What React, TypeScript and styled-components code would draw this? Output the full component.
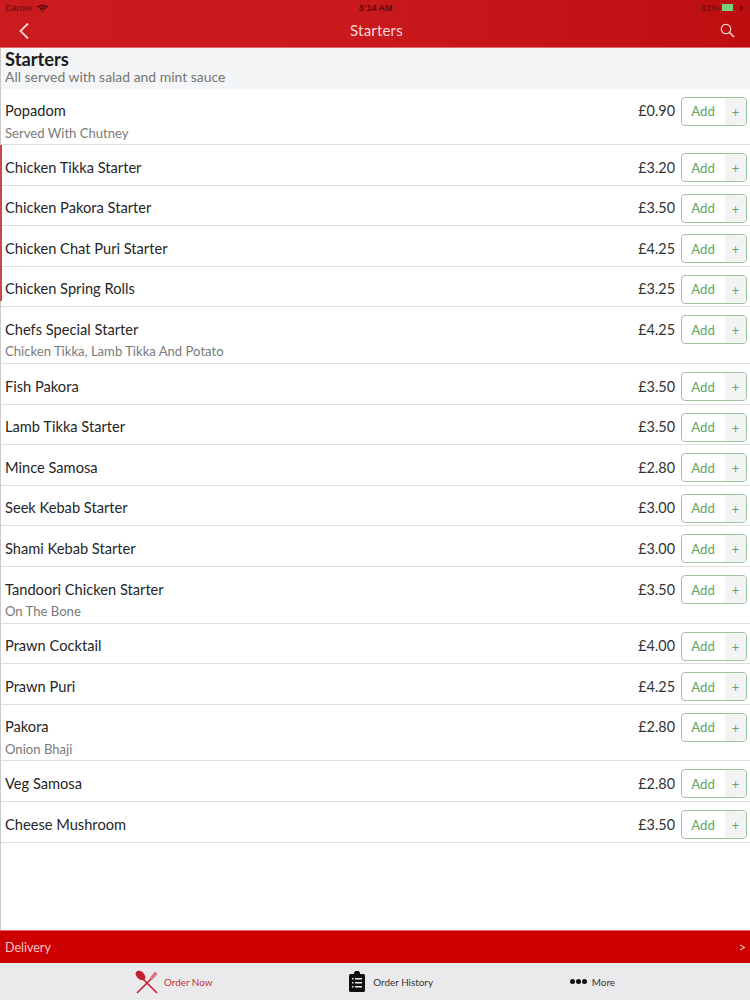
import React from 'react';
import styled, { createGlobalStyle } from 'styled-components';

const GlobalStyle = createGlobalStyle`
  html, body {
    margin: 0;
    padding: 0;
    background: #fff;
  }
  * {
    box-sizing: border-box;
  }
`;

const Page = styled.div`
  width: 750px;
  height: 1000px;
  display: flex;
  flex-direction: column;
  overflow: hidden;
  font-family: Lato, "Liberation Sans", sans-serif;
`;

const Header = styled.header`
  height: 48px;
  flex: none;
  background: linear-gradient(90deg, #ca1b1e 0%, #c81a1d 50%, #bd0f10 100%);
  border-bottom: 1px solid #e8696b;
  display: flex;
  flex-direction: column;
`;

const StatusBar = styled.div`
  height: 14px;
  padding: 1px 4px 0 5px;
  display: grid;
  grid-template-columns: 1fr auto 1fr;
  align-items: center;
  font-family: "Liberation Sans", Arial, sans-serif;
  font-size: 9px;
  color: #5e0b0d;
`;

const StatusLeft = styled.div`
  display: flex;
  align-items: center;
  gap: 4px;
`;

const StatusTime = styled.div`
  font-weight: 700;
`;

const StatusRight = styled.div`
  display: flex;
  align-items: center;
  justify-content: flex-end;
  gap: 3px;
`;

const Battery = styled.div`
  width: 11px;
  height: 7px;
  background: #79d27b;
`;

const NavBar = styled.div`
  flex: 1;
  display: grid;
  grid-template-columns: 1fr auto 1fr;
  align-items: center;
  padding: 0 15px 0 18px;
`;

const NavTitle = styled.div`
  font-size: 15px;
  color: #f8d5d5;
  letter-spacing: 0.2px;
  margin-top: -1px;
`;

const NavRight = styled.div`
  display: flex;
  justify-content: flex-end;
`;

const Main = styled.main`
  flex: 1;
  position: relative;
  border-left: 1px solid #c9c9c9;
`;

const ScrollMark = styled.div`
  position: absolute;
  left: -1px;
  top: 97px;
  width: 1.5px;
  height: 156px;
  background: #c9474d;
`;

const SectionHead = styled.div`
  height: 40.5px;
  padding: 1.5px 4px 0;
  background: #f4f5f7;
`;

const SectionTitle = styled.h2`
  margin: 0;
  font-size: 18.3px;
  line-height: 19px;
  font-weight: 700;
  color: #1b1b1b;
`;

const SectionNote = styled.p`
  margin: 0;
  font-size: 13.95px;
  line-height: 16px;
  color: #757575;
`;

const Row = styled.div`
  padding: 8px 3px 2.6px 4px;
  border-bottom: 1px solid #dedede;
`;

const RowMain = styled.div`
  height: 29px;
  display: flex;
  align-items: center;
`;

const ItemName = styled.div`
  flex: 1;
  font-size: 14.65px;
  color: #262626;
  margin-top: -1px;
`;

const Price = styled.div`
  font-size: 14.4px;
  color: #333;
  margin-right: 6px;
  margin-top: -1px;
`;

const AddButton = styled.div`
  width: 66px;
  height: 29px;
  display: flex;
  border: 1px solid #9cc59e;
  border-radius: 4px;
  overflow: hidden;
  background: #fff;
`;

const AddLabel = styled.div`
  flex: 1;
  display: flex;
  align-items: center;
  justify-content: center;
  padding-right: 1px;
  font-size: 13.2px;
  color: #5ea862;
`;

const AddPlus = styled.div`
  width: 21px;
  display: flex;
  align-items: center;
  justify-content: center;
  padding-top: 1px;
  font-size: 13px;
  color: #6f9e72;
  background: #f2f3f3;
`;

const ItemNote = styled.div`
  height: 16px;
  font-size: 13.1px;
  line-height: 14px;
  color: #7a7a7a;
`;

const DeliveryBar = styled.div`
  height: 33px;
  flex: none;
  padding: 0 4px 0 5px;
  display: flex;
  align-items: center;
  justify-content: space-between;
  background: #cc0000;
  border-top: 1px solid #e8696b;
  font-size: 12.5px;
  color: #f5c9c9;
`;

const TabBar = styled.nav`
  height: 37px;
  flex: none;
  padding: 0 135px;
  display: flex;
  align-items: center;
  justify-content: space-between;
  background: #eaeaec;
`;

const Tab = styled.div<{ $active?: boolean }>`
  display: flex;
  align-items: center;
  gap: ${(p) => (p.$active ? '5px' : '8px')};
  font-size: 9.9px;
  color: ${(p) => (p.$active ? '#c0303c' : '#333')};
`;

const MoreTab = styled(Tab)`
  gap: 5px;
`;

const Dots = styled.div`
  display: flex;
  gap: 1px;
`;

const Dot = styled.span`
  width: 5px;
  height: 5px;
  border-radius: 50%;
  background: #111;
`;

const items = [
  { name: 'Popadom', price: '0.90', note: 'Served With Chutney' },
  { name: 'Chicken Tikka Starter', price: '3.20' },
  { name: 'Chicken Pakora Starter', price: '3.50' },
  { name: 'Chicken Chat Puri Starter', price: '4.25' },
  { name: 'Chicken Spring Rolls', price: '3.25' },
  { name: 'Chefs Special Starter', price: '4.25', note: 'Chicken Tikka, Lamb Tikka And Potato' },
  { name: 'Fish Pakora', price: '3.50' },
  { name: 'Lamb Tikka Starter', price: '3.50' },
  { name: 'Mince Samosa', price: '2.80' },
  { name: 'Seek Kebab Starter', price: '3.00' },
  { name: 'Shami Kebab Starter', price: '3.00' },
  { name: 'Tandoori Chicken Starter', price: '3.50', note: 'On The Bone' },
  { name: 'Prawn Cocktail', price: '4.00' },
  { name: 'Prawn Puri', price: '4.25' },
  { name: 'Pakora', price: '2.80', note: 'Onion Bhaji' },
  { name: 'Veg Samosa', price: '2.80' },
  { name: 'Cheese Mushroom', price: '3.50' },
];

const App: React.FC = () => {
  return (
    <Page>
      <GlobalStyle />
      <Header>
        <StatusBar>
          <StatusLeft>
            Carrier
            <svg width="11" height="8" viewBox="0 0 11 8">
              <path d="M0 2.6a8 8 0 0 1 11 0L9.8 3.9a6.2 6.2 0 0 0-8.6 0zM2.2 4.7a5 5 0 0 1 6.6 0L7.6 6a3.2 3.2 0 0 0-4.2 0zM4.2 6.6a1.9 1.9 0 0 1 2.6 0L5.5 8z" fill="#5e0b0d" />
            </svg>
          </StatusLeft>
          <StatusTime>3:14 AM</StatusTime>
          <StatusRight>
            61%
            <Battery />
            <svg width="10" height="8" viewBox="0 0 10 8">
              <path d="M6 0 3 4.5h2L4 8l3.4-4.8H5.3z" fill="#5e0b0d" />
            </svg>
          </StatusRight>
        </StatusBar>
        <NavBar>
          <svg width="12" height="18" viewBox="0 0 12 18" fill="none">
            <path d="M10 1.5 2.5 9l7.5 7.5" stroke="#f8d5d5" strokeWidth="1.8" />
          </svg>
          <NavTitle>Starters</NavTitle>
          <NavRight>
            <svg width="15" height="15" viewBox="0 0 15 15" fill="none">
              <circle cx="6" cy="6" r="4.7" stroke="#f8d5d5" strokeWidth="1.2" />
              <path d="m9.5 9.5 4.5 4.5" stroke="#f8d5d5" strokeWidth="1.6" />
            </svg>
          </NavRight>
        </NavBar>
      </Header>

      <Main>
        <ScrollMark />
        <SectionHead>
          <SectionTitle>Starters</SectionTitle>
          <SectionNote>All served with salad and mint sauce</SectionNote>
        </SectionHead>
        {items.map((item) => (
          <Row key={item.name}>
            <RowMain>
              <ItemName>{item.name}</ItemName>
              <Price>£{item.price}</Price>
              <AddButton>
                <AddLabel>Add</AddLabel>
                <AddPlus>+</AddPlus>
              </AddButton>
            </RowMain>
            {item.note && <ItemNote>{item.note}</ItemNote>}
          </Row>
        ))}
      </Main>

      <DeliveryBar>
        <span>Delivery</span>
        <span>&gt;</span>
      </DeliveryBar>

      <TabBar>
        <Tab $active>
          <svg width="24" height="24" viewBox="0 0 24 24" fill="none">
            <path d="M8 9 22 23" stroke="#c21f2a" strokeWidth="1.6" />
            <ellipse cx="5.5" cy="5.5" rx="5.6" ry="3.8" transform="rotate(42 5.5 5.5)" fill="#c21f2a" />
            <path d="M16.5 8.5 2 23" stroke="#c21f2a" strokeWidth="1.6" />
            <path d="M15 7.5 20 1.5l2.5 2.5-5 5.5z" fill="#d9707a" />
          </svg>
          Order Now
        </Tab>
        <Tab>
          <svg width="16" height="21" viewBox="0 0 16 21">
            <path d="M1.5 3H5V1.5L6.5 0h3L11 1.5V3h3.5A1.5 1.5 0 0 1 16 4.5V19.5A1.5 1.5 0 0 1 14.5 21h-13A1.5 1.5 0 0 1 0 19.5V4.5A1.5 1.5 0 0 1 1.5 3z" fill="#111" />
            <path d="M3 7h1.5v1.5H3zM6 7h7v1.5H6zM3 11h1.5v1.5H3zM6 11h7v1.5H6zM3 15h1.5v1.5H3zM6 15h7v1.5H6z" fill="#eaeaec" />
          </svg>
          Order History
        </Tab>
        <MoreTab>
          <Dots>
            <Dot />
            <Dot />
            <Dot />
          </Dots>
          More
        </MoreTab>
      </TabBar>
    </Page>
  );
};

export default App;
